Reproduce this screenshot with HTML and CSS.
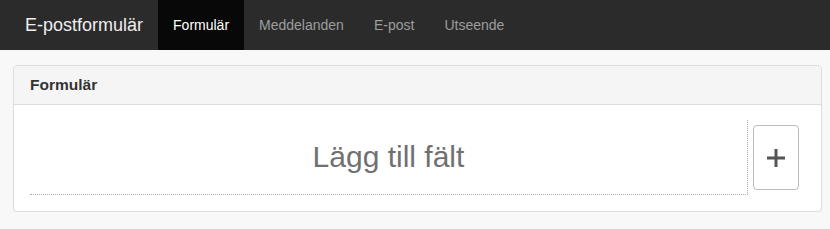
FILE: index.html
```html
<!DOCTYPE html>
<html lang="sv">
<head>
  <meta charset="UTF-8">
  <title>E-postformulär</title>
  <link rel="stylesheet" href="styles.css">
</head>
<body>
  <nav class="navbar">
    <a class="brand" href="#">E-postformulär</a>
    <ul class="nav">
      <li class="active"><a href="#">Formulär</a></li>
      <li><a href="#">Meddelanden</a></li>
      <li><a href="#">E-post</a></li>
      <li><a href="#">Utseende</a></li>
    </ul>
  </nav>

  <div class="container">
    <div class="panel">
      <div class="panel-heading">Formulär</div>
      <div class="panel-body">
        <div class="field-drop">Lägg till fält</div>
        <button class="add-btn" type="button" title="Lägg till">
          <svg width="18" height="18" viewBox="0 0 18 18">
            <rect x="7.5" y="0" width="3" height="18" fill="#555"/>
            <rect x="0" y="7.5" width="18" height="3" fill="#555"/>
          </svg>
        </button>
      </div>
    </div>
  </div>
</body>
</html>
```

FILE: styles.css
```css
* { box-sizing: border-box; margin: 0; padding: 0; }
body {
  background: #f8f8f8;
  font-family: "Liberation Sans", Arial, sans-serif;
  font-size: 14px;
  color: #333;
}
a { text-decoration: none; }

.navbar {
  height: 50px;
  background: #2b2b2b;
  display: flex;
  align-items: stretch;
  padding-left: 10px;
}
.brand {
  display: flex;
  align-items: center;
  padding: 0 15px;
  font-size: 18px;
  color: #eee;
}
.nav {
  list-style: none;
  display: flex;
}
.nav li a {
  display: flex;
  align-items: center;
  height: 50px;
  padding: 0 15px;
  color: #9d9d9d;
}
.nav li.active a {
  background: #080808;
  color: #fff;
}

.container {
  padding: 15px 8px 0 13px;
}
.panel {
  background: #fff;
  border: 1px solid #ddd;
  border-radius: 4px;
  box-shadow: 0 1px 1px rgba(0, 0, 0, 0.05);
}
.panel-heading {
  height: 39px;
  padding: 0 16px;
  display: flex;
  align-items: center;
  background: #f5f5f5;
  border-bottom: 1px solid #ddd;
  border-radius: 3px 3px 0 0;
  font-size: 15.5px;
  font-weight: bold;
  color: #333;
}
.panel-body {
  display: flex;
  align-items: center;
  padding: 15px 22px 16px 16px;
}
.field-drop {
  flex: 1;
  height: 75px;
  display: flex;
  align-items: center;
  justify-content: center;
  border-right: 1px dotted #aaa;
  border-bottom: 1px dotted #aaa;
  font-size: 30px;
  color: #707070;
}
.add-btn {
  margin-left: 5px;
  width: 46px;
  height: 65px;
  display: flex;
  align-items: center;
  justify-content: center;
  background: #fff;
  border: 1px solid #bbb;
  border-radius: 4px;
}
```
